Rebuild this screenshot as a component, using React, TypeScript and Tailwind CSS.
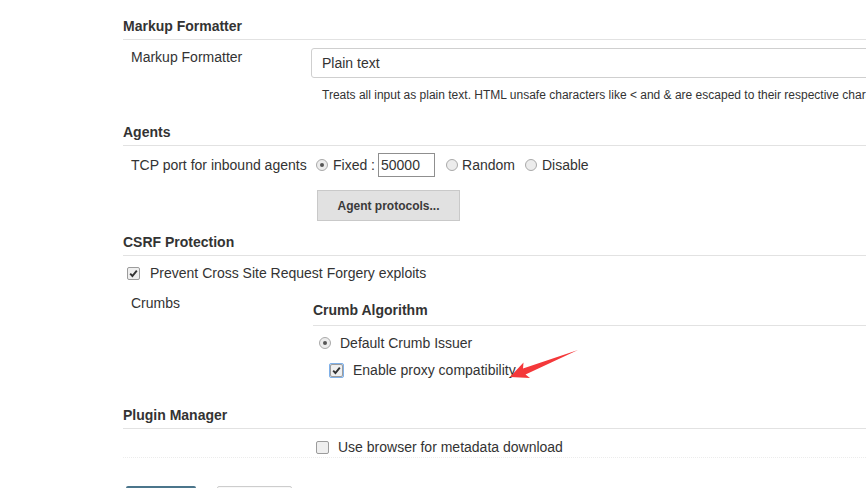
import React from 'react'

function Radio({ checked = false }: { checked?: boolean }) {
  return (
    <span className="flex h-[12px] w-[12px] shrink-0 items-center justify-center rounded-full border border-[#a9a9a9] bg-[#ececec]">
      {checked && <span className="h-[4px] w-[4px] rounded-full bg-[#555]" />}
    </span>
  )
}

function Check({ checked = false, focused = false }: { checked?: boolean; focused?: boolean }) {
  const box = (
    <span className="flex h-[13px] w-[13px] shrink-0 items-center justify-center rounded-[2px] border border-[#9c9c9c] bg-[#efefef]">
      {checked && (
        <svg width="11" height="11" viewBox="0 0 11 11">
          <path d="M2.2 5.6 L4.4 8 L8.8 2.6" fill="none" stroke="#333" strokeWidth="1.9" />
        </svg>
      )}
    </span>
  )
  if (!focused) return box
  return <span className="flex rounded-[2px] border border-[#7fb0e8] bg-[#cfe2f8] p-[0px]">{box}</span>
}

function SectionHeader({ title, className = '' }: { title: string; className?: string }) {
  return (
    <div className={`border-b border-[#e2e2e2] pb-[5px] text-[14px] font-bold leading-4 ${className}`}>{title}</div>
  )
}

export default function App() {
  return (
    <div className="h-[488px] w-[866px] overflow-hidden bg-white font-['Liberation_Sans',Arial,sans-serif] text-[14px] leading-4 text-[#333]">
      <div className="pl-[123px]">
        {/* Markup formatter */}
        <SectionHeader title="Markup Formatter" className="mt-[18px]" />
        <div className="mt-[8px] flex items-start">
          <div className="mt-[1px] w-[188px] shrink-0 pl-[8px]">Markup Formatter</div>
          <div className="flex h-[30px] w-[620px] shrink-0 items-center rounded-[3px] border border-[#cfcfcf] pl-[10px]">
            Plain text
          </div>
        </div>
        <div className="mt-[9px] ml-[199px] whitespace-nowrap text-[12px]">
          Treats all input as plain text. HTML unsafe characters like &lt; and &amp; are escaped to their respective character entities.
        </div>

        {/* Agents */}
        <SectionHeader title="Agents" className="mt-[21px]" />
        <div className="mt-[7px] flex items-center">
          <div className="w-[193px] shrink-0 pl-[8px]">TCP port for inbound agents</div>
          <div className="flex items-center">
            <Radio checked />
            <span className="ml-[5px]">Fixed :</span>
            <span className="ml-[3px] flex h-[24px] w-[57px] items-center border border-[#8f8f8f] pl-[2px]">50000</span>
            <span className="ml-[11px]">
              <Radio />
            </span>
            <span className="ml-[4px]">Random</span>
            <span className="ml-[10px]">
              <Radio />
            </span>
            <span className="ml-[5px]">Disable</span>
          </div>
        </div>
        <div className="ml-[194px] mt-[13px] flex h-[31px] w-[143px] items-center justify-center border border-[#c9c9c9] bg-[#e1e1e1] text-[12px] font-bold text-[#3a3a3a]">
          Agent protocols...
        </div>

        {/* CSRF */}
        <SectionHeader title="CSRF Protection" className="mt-[13px]" />
        <div className="mt-[9px] flex items-center pl-[4px]">
          <Check checked />
          <span className="ml-[10px]">Prevent Cross Site Request Forgery exploits</span>
        </div>
        <div className="mt-[14px] flex items-start">
          <div className="w-[190px] shrink-0 pl-[8px]">Crumbs</div>
          <div className="flex-1">
            <div className="mt-[7px] border-b border-[#e2e2e2] pb-[7px] font-bold">Crumb Algorithm</div>
            <div className="mt-[9px] flex items-center pl-[6px]">
              <Radio checked />
              <span className="ml-[9px]">Default Crumb Issuer</span>
            </div>
            <div className="mt-[11px] flex items-center pl-[16px]">
              <Check checked focused />
              <span className="ml-[9px]">Enable proxy compatibility</span>
            </div>
          </div>
        </div>

        {/* Plugin manager */}
        <SectionHeader title="Plugin Manager" className="mt-[29px] pb-[4px]" />
        <div className="flex items-center border-b border-dotted border-[#ececec] pb-[2px] pt-[10px] pl-[193px]">
          <Check />
          <span className="ml-[9px]">Use browser for metadata download</span>
        </div>
        <div className="mt-[28px] flex gap-[21px] pl-[3px]">
          <div className="h-[30px] w-[70px] rounded-[2px] bg-[#4b758b]" />
          <div className="h-[30px] w-[75px] rounded-[2px] border border-[#cdcdcd] bg-[#f8f8f8]" />
        </div>
      </div>

      {/* annotation arrow */}
      <svg className="pointer-events-none absolute left-0 top-0" width="866" height="488">
        <polygon
          points="510,377 523.5,362.5 523,368.5 578,350 525.5,374.5 530,378"
          fill="#f4383a"
        />
      </svg>
    </div>
  )
}
